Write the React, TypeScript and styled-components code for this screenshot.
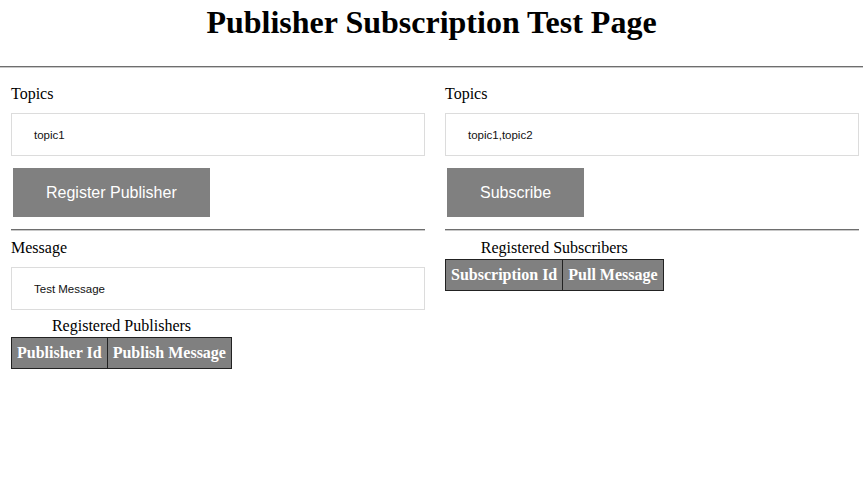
import React from "react";
import styled, { createGlobalStyle } from "styled-components";

const Global = createGlobalStyle`
  html, body { margin: 0; padding: 0; background: #fff; }
  body { font-family: "Liberation Serif", "Times New Roman", serif; color: #000; }
`;

const Page = styled.div`
  width: 863px;
`;

const Title = styled.h1`
  margin: 5px 0 0;
  text-align: center;
  font-size: 32px;
  font-weight: bold;
  line-height: 35px;
  height: 61px;
`;

const Rule = styled.div`
  height: 2px;
  background: #6e6e6e;
  border-bottom: 1px solid #c8c8c8;
  box-sizing: border-box;
`;

const Columns = styled.div`
  display: grid;
  grid-template-columns: 1fr 1fr;
  column-gap: 20px;
  padding: 0 4px 0 11px;
`;

const Column = styled.div`
  display: flex;
  flex-direction: column;
  align-items: stretch;
`;

const Label = styled.div<{ $top: number }>`
  font-size: 16px;
  line-height: 18px;
  margin-top: ${(p) => p.$top}px;
`;

const Field = styled.div<{ $top: number }>`
  margin-top: ${(p) => p.$top}px;
  height: 43px;
  box-sizing: border-box;
  border: 1px solid #dcdcdc;
  padding-left: 22px;
  display: flex;
  align-items: center;
  font-family: "Liberation Sans", Arial, sans-serif;
  font-size: 11.5px;
  color: #111;
`;

const Button = styled.button`
  align-self: flex-start;
  margin: 12px 0 0 2px;
  height: 49px;
  padding: 1px 33px 0;
  border: none;
  background: #808080;
  color: #fff;
  font-family: "Liberation Sans", Arial, sans-serif;
  font-size: 16px;
`;

const SectionRule = styled(Rule)`
  margin-top: 12px;
`;

const Table = styled.table<{ $top: number }>`
  margin-top: ${(p) => p.$top}px;
  align-self: flex-start;
  border-collapse: collapse;
  font-size: 16px;
`;

const Caption = styled.caption`
  line-height: 18px;
  padding-bottom: 2px;
  font-weight: normal;
`;

const Th = styled.th`
  background: #808080;
  color: #fff;
  border: 1px solid #222;
  padding: 6px 5px;
  line-height: 18px;
  font-weight: bold;
  white-space: nowrap;
`;

export default function App() {
  return (
    <Page>
      <Global />
      <Title>Publisher Subscription Test Page</Title>
      <Rule />
      <Columns>
        <Column>
          <Label $top={17}>Topics</Label>
          <Field $top={10}>topic1</Field>
          <Button>Register Publisher</Button>
          <SectionRule />
          <Label $top={8}>Message</Label>
          <Field $top={10}>Test Message</Field>
          <Table $top={7}>
            <Caption>Registered Publishers</Caption>
            <thead>
              <tr>
                <Th>Publisher Id</Th>
                <Th>Publish Message</Th>
              </tr>
            </thead>
          </Table>
        </Column>
        <Column>
          <Label $top={17}>Topics</Label>
          <Field $top={10}>topic1,topic2</Field>
          <Button>Subscribe</Button>
          <SectionRule />
          <Table $top={8}>
            <Caption>Registered Subscribers</Caption>
            <thead>
              <tr>
                <Th>Subscription Id</Th>
                <Th>Pull Message</Th>
              </tr>
            </thead>
          </Table>
        </Column>
      </Columns>
    </Page>
  );
}
